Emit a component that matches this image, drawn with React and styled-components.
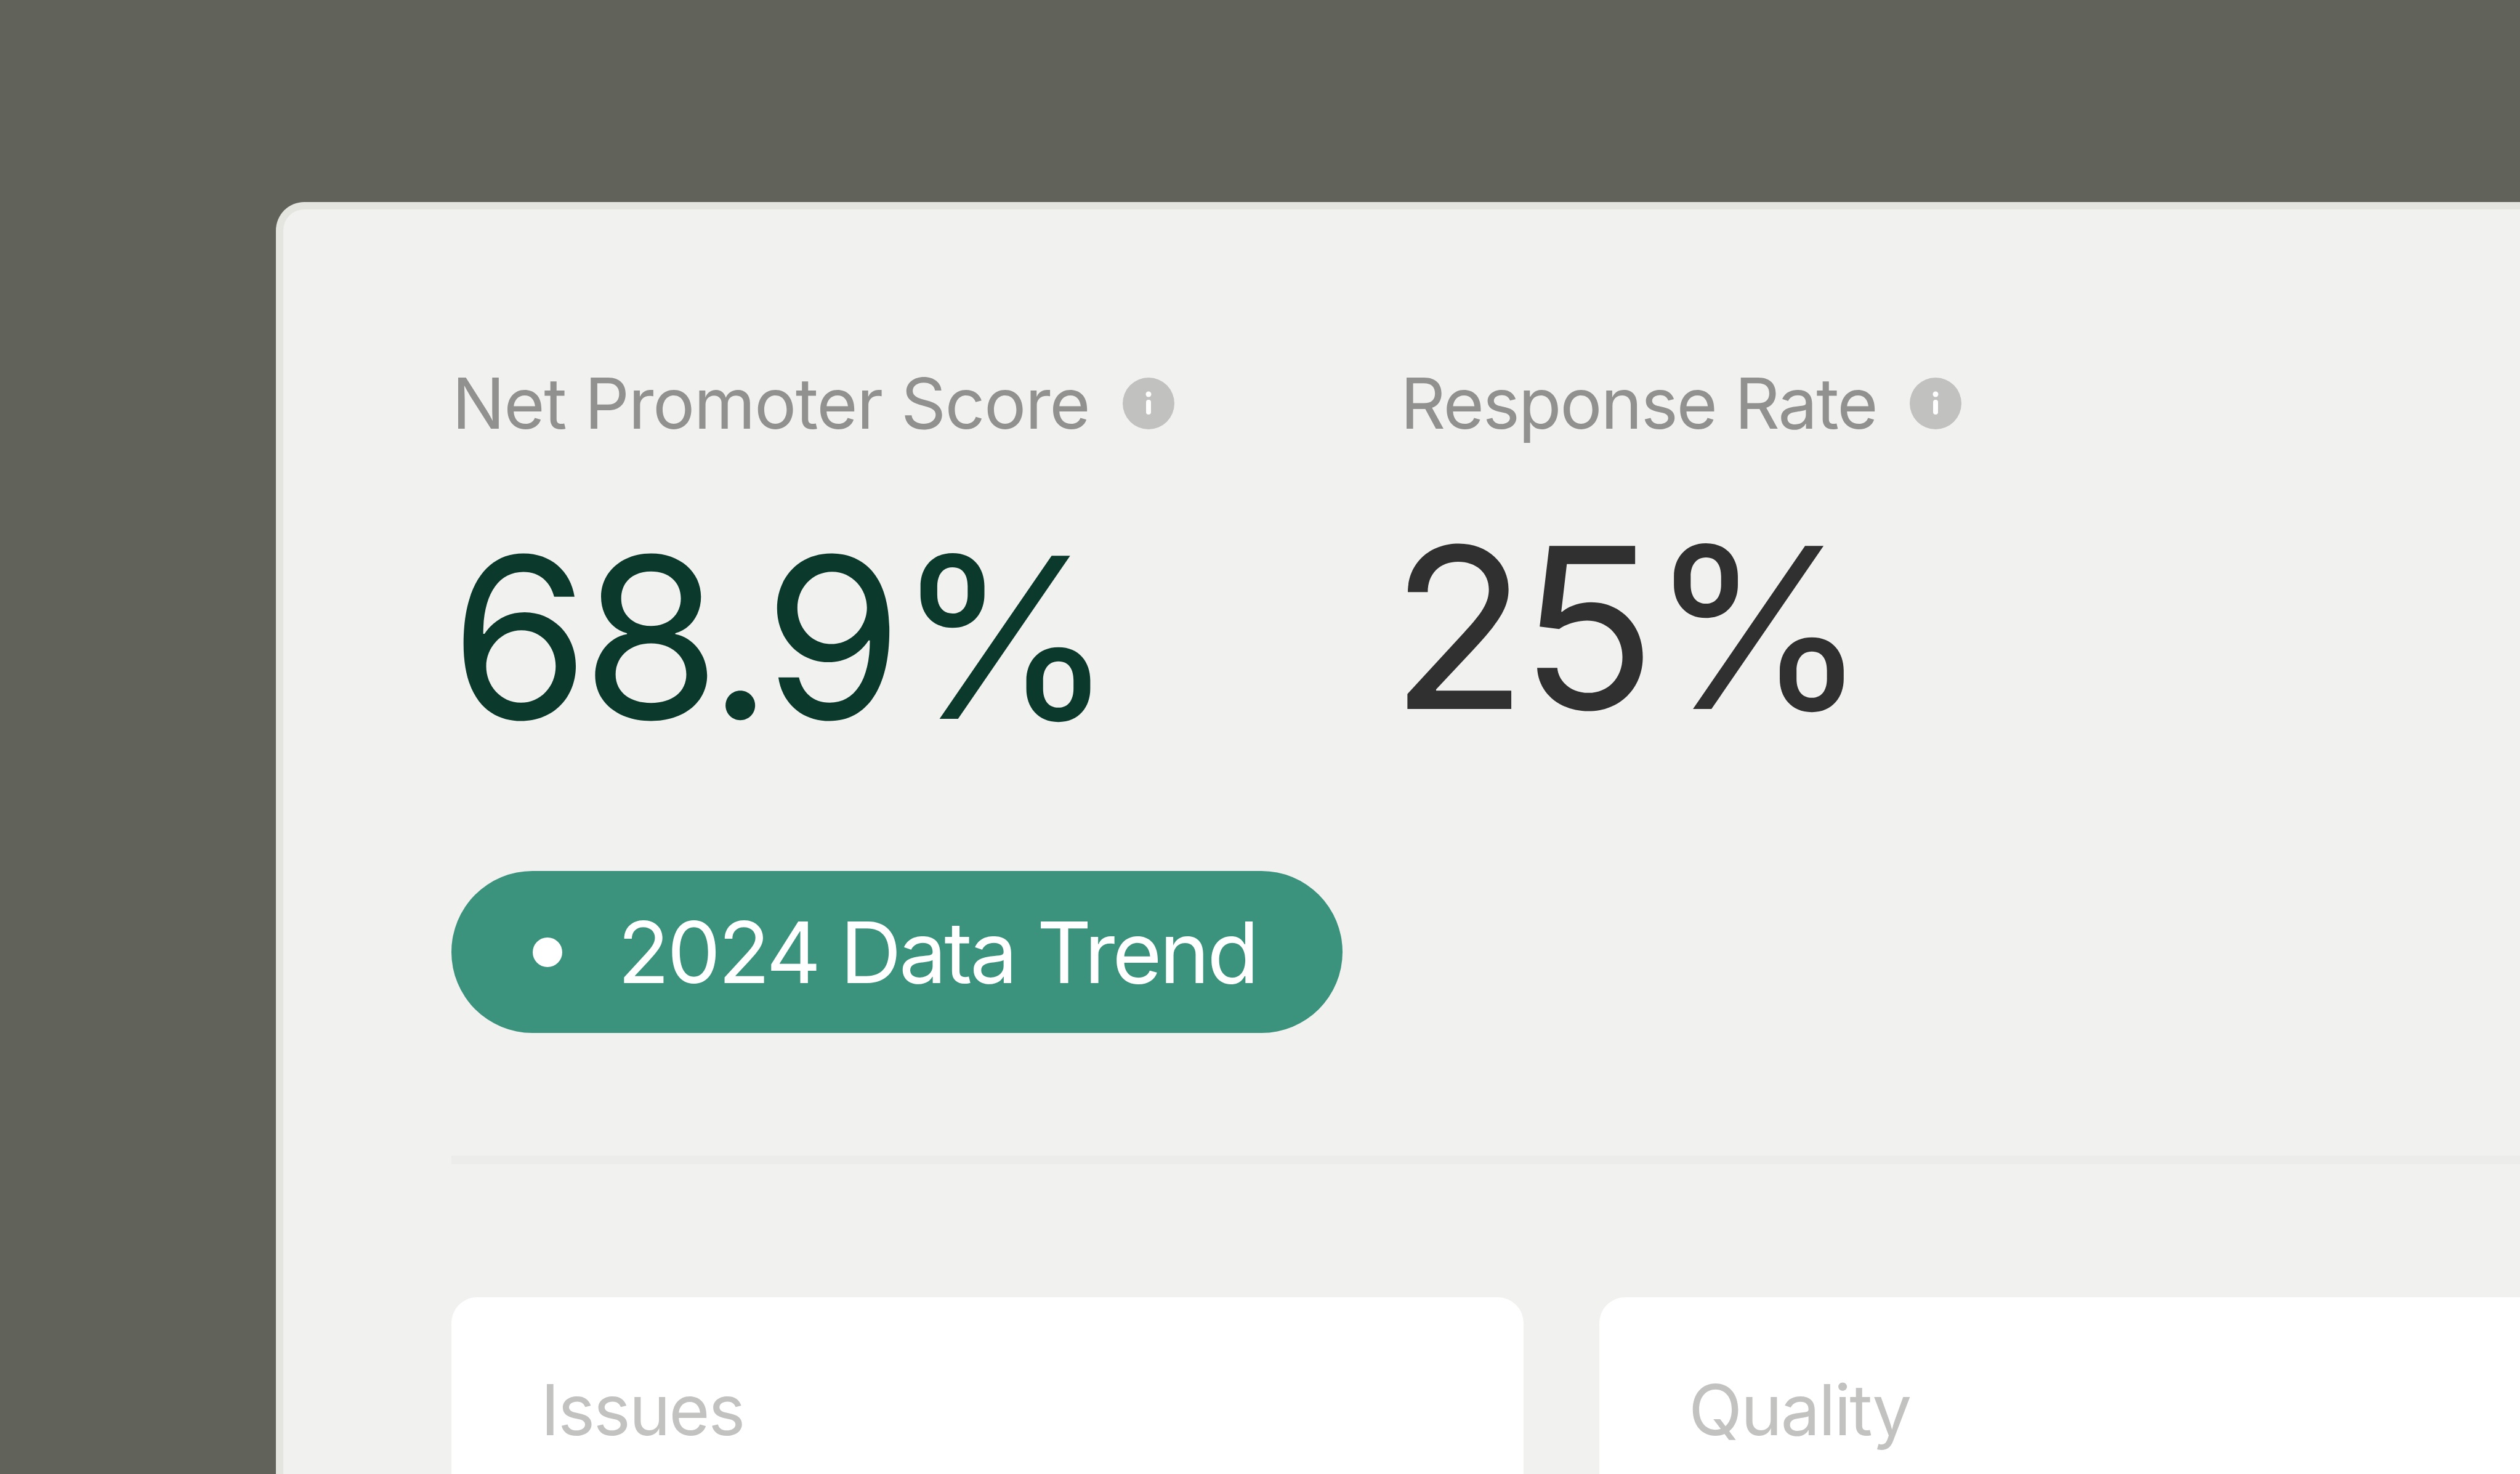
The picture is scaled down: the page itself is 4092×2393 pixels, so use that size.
import styled, { createGlobalStyle } from "styled-components";

const GlobalStyle = createGlobalStyle`
  html, body {
    margin: 0;
    padding: 0;
    background: #61625a;
  }
`;

const Page = styled.div`
  display: flex;
  width: 4092px;
  height: 2393px;
  padding: 328px 0 0 448px;
  box-sizing: border-box;
  overflow: hidden;
  background: #61625a;
  font-family: Inter, "Liberation Sans", sans-serif;
`;

const Panel = styled.main`
  flex: 1;
  box-sizing: border-box;
  height: 2400px;
  padding: 255px 0 0 273px;
  background: #f1f2f0;
  border: 12px solid #e4e5de;
  border-right: 0;
  border-bottom: 0;
  border-top-left-radius: 46px;
`;

const Stats = styled.section`
  display: flex;
`;

const Stat = styled.div`
  width: 1540px;
  flex-shrink: 0;
`;

const LabelRow = styled.div`
  display: flex;
  align-items: center;
  gap: 54px;
  height: 120px;
`;

const Label = styled.span`
  padding-left: 1px;
  font-size: 114px;
  font-weight: 400;
  letter-spacing: ${(p) => p.$tracking}px;
  line-height: 120px;
  white-space: nowrap;
  color: #919290;
`;

const InfoDot = styled.svg`
  width: 84px;
  height: 84px;
  flex-shrink: 0;
`;

const Value = styled.div`
  margin-top: ${(p) => p.$top}px;
  margin-left: ${(p) => p.$indent}px;
  font-size: 364px;
  font-weight: 400;
  letter-spacing: -12px;
  line-height: 372px;
  white-space: nowrap;
  color: ${(p) => p.$color};
`;

const TrendPill = styled.div`
  display: inline-flex;
  align-items: center;
  gap: 90px;
  box-sizing: border-box;
  height: 263px;
  margin-top: 193px;
  padding: 0 139px 0 132px;
  border-radius: 132px;
  background: #3b937d;
  color: #ffffff;
  font-size: 138px;
  font-weight: 400;
  letter-spacing: -4px;
  white-space: nowrap;
`;

const TrendDot = styled.span`
  width: 48px;
  height: 48px;
  border-radius: 50%;
  background: #ffffff;
`;

const Divider = styled.hr`
  height: 14px;
  margin: 199px 0 0;
  border: 0;
  background: #ecedea;
`;

const Cards = styled.section`
  display: flex;
  gap: 123px;
  margin-top: 216px;
`;

const Card = styled.article`
  width: 1741px;
  height: 400px;
  flex-shrink: 0;
  box-sizing: border-box;
  padding: 123px 0 0 145px;
  border-radius: 42px;
  background: #ffffff;
`;

const CardTitle = styled.h3`
  margin: 0;
  font-size: 114px;
  font-weight: 400;
  letter-spacing: -2.5px;
  line-height: 120px;
  color: #c2c3c1;
`;

const InfoIcon = () => (
  <InfoDot viewBox="0 0 84 84">
    <circle cx="42" cy="42" r="42" fill="#c1c2c0" />
    <circle cx="42" cy="27" r="4.5" fill="#ffffff" />
    <rect x="38" y="36" width="8" height="24" rx="4" fill="#ffffff" />
  </InfoDot>
);

export default function App() {
  return (
    <>
      <GlobalStyle />
      <Page>
        <Panel>
          <Stats>
            <Stat>
              <LabelRow>
                <Label $tracking={-1.6}>Net Promoter Score</Label>
                <InfoIcon />
              </LabelRow>
              <Value $top={134} $indent={-2} $color="#0b3a2d">68.9%</Value>
            </Stat>
            <Stat>
              <LabelRow>
                <Label $tracking={-2.2}>Response Rate</Label>
                <InfoIcon />
              </LabelRow>
              <Value $top={118} $indent={-15} $color="#303030">25%</Value>
            </Stat>
          </Stats>
          <TrendPill>
            <TrendDot />
            2024 Data Trend
          </TrendPill>
          <Divider />
          <Cards>
            <Card>
              <CardTitle>Issues</CardTitle>
            </Card>
            <Card>
              <CardTitle>Quality</CardTitle>
            </Card>
          </Cards>
        </Panel>
      </Page>
    </>
  );
}
